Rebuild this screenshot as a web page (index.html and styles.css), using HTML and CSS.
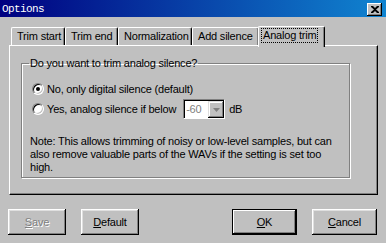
FILE: index.html
```html
<!DOCTYPE html>
<html>
<head>
  <link rel="stylesheet" href="styles.css">
</head>
<body>
  <div class="window">
    <div class="titlebar">
      <span class="title">Options</span>
      <span class="close">
        <svg width="8" height="7" viewBox="0 0 8 7"><path d="M0 0h2l2 2 2-2h2v1l-3 2.5 3 2.5v1h-2l-2-2-2 2h-2v-1l3-2.5-3-2.5z" fill="#000"/></svg>
      </span>
    </div>

    <div class="content">
      <div class="tabs">
        <div class="tab t1">Trim start</div>
        <div class="tab t2">Trim end</div>
        <div class="tab t3">Normalization</div>
        <div class="tab t4">Add silence</div>
        <div class="tab active"><span class="focus">Analog trim</span></div>
      </div>

      <div class="panel">
        <fieldset class="group">
          <legend>Do you want to trim analog silence?</legend>
          <label class="radio-row first">
            <span class="radio checked"></span>
            No, only digital silence (default)
          </label>
          <label class="radio-row">
            <span class="radio"></span>
            Yes, analog silence if below
            <span class="combo">
              <span class="combo-value">-60</span>
              <span class="combo-btn">
                <svg width="7" height="4" viewBox="0 0 7 4"><path d="M0 0h7l-3.5 4z" fill="#808080"/></svg>
              </span>
            </span>
            dB
          </label>
          <p class="note">Note: This allows trimming of noisy or low-level samples, but can also remove valuable parts of the WAVs if the setting is set too high.</p>
        </fieldset>
      </div>

      <div class="footer">
        <div class="left">
          <button class="btn disabled"><u>S</u>ave</button>
          <button class="btn"><u>D</u>efault</button>
        </div>
        <div class="right">
          <button class="btn default"><u>O</u>K</button>
          <button class="btn"><u>C</u>ancel</button>
        </div>
      </div>
    </div>
  </div>
</body>
</html>
```

FILE: styles.css
```css
* {
  box-sizing: border-box;
}
body {
  margin: 0;
  background-color: #c0c0c0;
  font-family: "Liberation Sans", Arial, sans-serif;
  font-size: 11px;
  letter-spacing: -0.2px;
  color: #000;
}
.window {
  width: 386px;
  height: 243px;
  overflow: hidden;
}
.titlebar {
  height: 17px;
  background: linear-gradient(to right, #000080, #1084d0);
  display: flex;
  align-items: center;
  justify-content: space-between;
  padding: 0 4px 0 2px;
}
.title {
  color: #fff;
  font-family: "Liberation Mono", monospace;
  font-size: 11px;
  letter-spacing: -0.6px;
}
.close {
  width: 15px;
  height: 13px;
  background: #c0c0c0;
  box-shadow: inset -1px -1px #000, inset 1px 1px #fff, inset -2px -2px #808080;
  display: flex;
  align-items: center;
  justify-content: center;
  margin-top: 1px;
}
.content {
  padding: 9px 9px 0 9px;
}
.tabs {
  display: flex;
  align-items: flex-end;
  height: 19px;
  padding-left: 2px;
  position: relative;
  z-index: 1;
}
.tab {
  height: 18px;
  line-height: 16px;
  padding: 0 0 0 5px;
  white-space: nowrap;
  border-top: 1px solid #fff;
  border-left: 1px solid #fff;
  border-right: 1px solid #000;
  box-shadow: inset -1px 0 #808080;
  border-radius: 2px 2px 0 0;
}
.t1 { width: 54px; }
.t2 { width: 53px; }
.t3 { width: 74px; }
.t4 { width: 67px; }
.tab.active {
  height: 21px;
  width: 67px;
  margin-left: -1px;
  margin-bottom: -2px;
  padding: 0 0 0 3px;
  background: #c0c0c0;
}
.focus {
  display: inline-block;
  outline: 1px dotted #000;
  line-height: 13px;
  padding: 0 1px;
  margin-top: 1px;
}
.panel {
  width: 369px;
  height: 150px;
  border-top: 1px solid #fff;
  border-left: 1px solid #fff;
  border-right: 1px solid #000;
  border-bottom: 1px solid #000;
  box-shadow: inset -1px -1px #808080;
  padding: 11px 27px 0 11px;
}
.group {
  margin: 0;
  height: 121px;
  border: 1px solid #808080;
  box-shadow: 1px 1px #fff, inset 1px 1px #fff;
  padding: 5px 8px 0 10px;
}
.group legend {
  padding: 0 1px;
  margin-left: -3px;
  line-height: 13px;
}
.radio-row {
  display: flex;
  align-items: center;
  height: 20px;
  gap: 3px;
}
.radio-row.first {
  margin-top: 4px;
}
.radio {
  width: 12px;
  height: 12px;
  border-radius: 50%;
  background: #fff;
  border: 1px solid;
  border-color: #808080 #fff #fff #808080;
  box-shadow: inset 1px 1px #000, inset -1px -1px #c0c0c0;
  position: relative;
}
.radio.checked::after {
  content: "";
  position: absolute;
  left: 3px;
  top: 3px;
  width: 4px;
  height: 4px;
  border-radius: 50%;
  background: #000;
}
.combo {
  display: flex;
  width: 42px;
  height: 20px;
  border: 1px solid;
  border-color: #808080 #fff #fff #808080;
  box-shadow: inset 1px 1px #000;
  background: #fff;
  margin: 0 1px 0 4px;
}
.combo-value {
  flex: 1;
  color: #808080;
  padding: 3px 0 0 2px;
}
.combo-btn {
  width: 16px;
  margin: 1px 0 0 0;
  background: #c0c0c0;
  box-shadow: inset -1px -1px #000, inset 1px 1px #dfdfdf, inset -2px -2px #808080, inset 2px 2px #fff;
  display: flex;
  align-items: center;
  justify-content: center;
}
.note {
  margin: 16px 0 0 -2px;
  line-height: 13px;
}
.footer {
  display: flex;
  justify-content: space-between;
  margin-top: 14px;
}
.left, .right {
  display: flex;
  gap: 15px;
}
.left {
  margin-left: -1px;
}
.btn {
  width: 58px;
  height: 26px;
  font-family: "Liberation Sans", Arial, sans-serif;
  font-size: 11px;
  letter-spacing: -0.2px;
  color: #000;
  background: #c0c0c0;
  border: none;
  padding: 0;
  box-shadow: inset -1px -1px #000, inset 1px 1px #fff, inset -2px -2px #808080, inset 2px 2px #dfdfdf;
}
.right .btn {
  width: 65px;
}
.btn.default {
  box-shadow: inset 0 0 0 1px #000, inset -2px -2px #000, inset 2px 2px #fff, inset -3px -3px #808080;
}
.btn.disabled {
  color: #808080;
  text-shadow: 1px 1px #fff;
}
```
